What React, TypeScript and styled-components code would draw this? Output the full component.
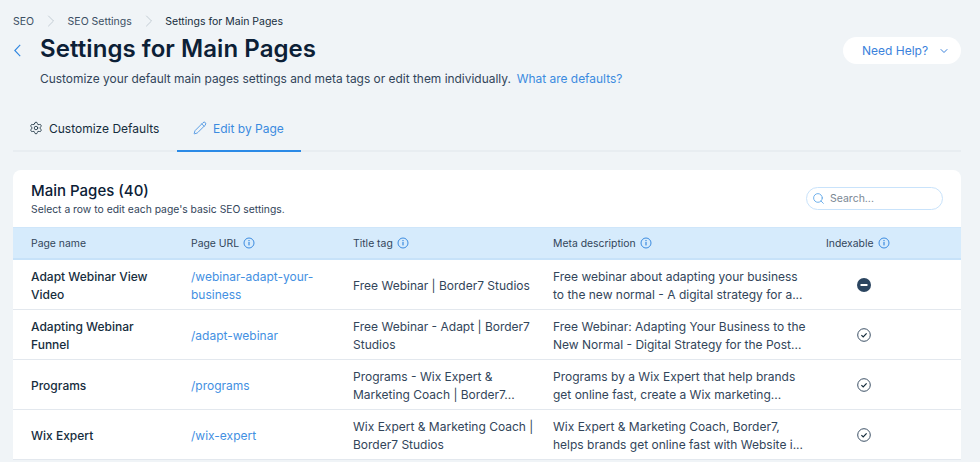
import * as React from 'react';
import styled, { createGlobalStyle } from 'styled-components';
import { ChevronDown, ChevronRight, Search, Settings, Pencil } from 'lucide-react';

const GlobalStyle = createGlobalStyle`
	html, body {
		margin: 0;
		padding: 0;
		height: 100%;
		overflow: hidden;
		background-color: #f0f4f7;
		font-family: Inter, "Noto Sans", sans-serif;
		color: #162d3d;
	}
	* {
		box-sizing: border-box;
	}
`;

const Page = styled.div`
	width: 980px;
	height: 462px;
	overflow: hidden;
	padding: 0 19px 0 13px;
	display: flex;
	flex-direction: column;
`;

const Breadcrumbs = styled.nav`
	display: flex;
	align-items: center;
	height: 16px;
	margin-top: 13px;
	font-size: 10.5px;
`;

const Crumb = styled.span<{ current?: boolean }>`
	color: ${({ current }) => (current ? '#162d3d' : '#3b4f63')};
`;

const CrumbSep = styled.span`
	display: flex;
	width: 33.5px;
	justify-content: center;
	color: #b4bec8;
`;

const Header = styled.header`
	display: flex;
	justify-content: space-between;
	align-items: flex-start;
`;

const TitleRow = styled.div`
	display: flex;
	align-items: center;
	height: 34px;
	margin-top: 2px;
`;

const BackButton = styled.span`
	display: flex;
	width: 27px;
	padding: 5px 0 0 1px;
`;

const Title = styled.h1`
	margin: 0;
	font-size: 24px;
	font-weight: 600;
	color: #0c2036;
	letter-spacing: 0.07px;
`;

const Subtitle = styled.p`
	margin: 5px 0 0 27px;
	font-size: 11.93px;
	line-height: 18px;
	color: #32455a;
`;

const Link = styled.a`
	margin-left: 6px;
	color: #3b8be0;
`;

const HelpButton = styled.button`
	display: flex;
	align-items: center;
	justify-content: space-between;
	width: 118px;
	height: 27px;
	margin-top: 8px;
	padding: 0 11px 0 19px;
	border: 0;
	border-radius: 14px;
	background-color: #fff;
	color: #3b82dc;
	font-family: inherit;
	font-size: 12px;
`;

const Tabs = styled.div`
	display: flex;
	height: 48px;
	margin-top: 16px;
	border-bottom: 2px solid #e8edf1;
`;

const Tab = styled.div<{ active?: boolean }>`
	display: flex;
	align-items: center;
	gap: 6px;
	height: 48px;
	padding: 2px 17.6px 0 16px;
	font-size: 12px;
	color: ${({ active }) => (active ? '#3b8be0' : '#162d3d')};
	border-bottom: 2px solid ${({ active }) => (active ? '#2b8ae6' : 'transparent')};
`;

const Card = styled.section`
	margin-top: 18px;
	background-color: #fff;
	border-radius: 8px 8px 0 0;
`;

const CardHeader = styled.div`
	display: flex;
	justify-content: space-between;
	height: 57px;
	padding: 11px 18px;
`;

const CardTitle = styled.h2`
	margin: 0;
	font-size: 15px;
	line-height: 20px;
	font-weight: 500;
	color: #0c2036;
`;

const CardHint = styled.p`
	margin: 1px 0 0;
	font-size: 10.35px;
	line-height: 14px;
	color: #32455a;
`;

const SearchBox = styled.div`
	display: flex;
	align-items: center;
	gap: 5px;
	width: 137px;
	height: 23px;
	margin-top: 6px;
	padding: 0 5px;
	border: 1px solid #c9e3fb;
	border-radius: 12px;
	font-size: 10.5px;
	color: #7a8794;
`;

const HeadRow = styled.div`
	display: grid;
	grid-template-columns: 160px 162px 200px 273px 1fr;
	align-items: center;
	height: 33px;
	padding-left: 18px;
	background-color: #d6ebfc;
	border-top: 1px solid #cfe6fa;
	border-bottom: 2px solid #c7e2f9;
	font-size: 10.4px;
	color: #32455a;
`;

const HeadCell = styled.div`
	display: flex;
	align-items: center;
	gap: 4px;
`;

const Row = styled.div`
	display: grid;
	grid-template-columns: 160px 162px 200px 273px 1fr;
	align-items: center;
	height: 50px;
	padding-left: 18px;
	border-bottom: 1px solid #e3e8ee;
	font-size: 12px;
	line-height: 18px;
	color: #32455a;
`;

const TextCell = styled.div`
	padding-top: 2px;
`;

const NameCell = styled(TextCell)`
	font-weight: 450;
	color: #162d3d;
`;

const UrlCell = styled(TextCell)`
	color: #4390e2;
`;

const Line = styled.div`
	white-space: nowrap;
`;

const StatusCell = styled.div`
	display: flex;
	padding-left: 31px;
`;

const BackIcon = () => (
	<svg width="7" height="13" viewBox="0 0 7 13" fill="none">
		<path d="M6.2 .8.8 6.5l5.4 5.7" stroke="#2f86e0" strokeWidth="1.1" />
	</svg>
);

const InfoIcon = () => (
	<svg width="12" height="12" viewBox="0 0 12 12" fill="none">
		<circle cx="6" cy="6" r="5" stroke="#3b8be0" />
		<rect x="5.4" y="5" width="1.2" height="3.4" fill="#3b8be0" />
		<rect x="5.4" y="3" width="1.2" height="1.2" fill="#3b8be0" />
	</svg>
);

const CheckIcon = () => (
	<svg width="14" height="14" viewBox="0 0 14 14" fill="none">
		<circle cx="7" cy="7" r="6.3" stroke="#3d5166" />
		<path d="M4.4 7.2 6.2 9l3.4-3.6" stroke="#162d3d" strokeWidth="1.2" />
	</svg>
);

const MinusIcon = () => (
	<svg width="14" height="14" viewBox="0 0 14 14">
		<circle cx="7" cy="7" r="7" fill="#2b4560" />
		<rect x="3.5" y="6" width="7" height="2" rx="0.5" fill="#fff" />
	</svg>
);

const columns = [
	{ label: 'Page name', info: false },
	{ label: 'Page URL', info: true },
	{ label: 'Title tag', info: true },
	{ label: 'Meta description', info: true },
	{ label: 'Indexable', info: true }
];

const rows = [
	{
		name: ['Adapt Webinar View', 'Video'],
		url: ['/webinar-adapt-your-', 'business'],
		title: ['Free Webinar | Border7 Studios'],
		meta: ['Free webinar about adapting your business', 'to the new normal - A digital strategy for a...'],
		indexable: false
	},
	{
		name: ['Adapting Webinar', 'Funnel'],
		url: ['/adapt-webinar'],
		title: ['Free Webinar - Adapt | Border7', 'Studios'],
		meta: ['Free Webinar: Adapting Your Business to the', 'New Normal - Digital Strategy for the Post...'],
		indexable: true
	},
	{
		name: ['Programs'],
		url: ['/programs'],
		title: ['Programs - Wix Expert &', 'Marketing Coach | Border7...'],
		meta: ['Programs by a Wix Expert that help brands', 'get online fast, create a Wix marketing...'],
		indexable: true
	},
	{
		name: ['Wix Expert'],
		url: ['/wix-expert'],
		title: ['Wix Expert & Marketing Coach |', 'Border7 Studios'],
		meta: ['Wix Expert & Marketing Coach, Border7,', 'helps brands get online fast with Website i...'],
		indexable: true
	}
];

const Lines = ({ lines }: { lines: string[] }) => (
	<>
		{lines.map((line) => (
			<Line key={line}>{line}</Line>
		))}
	</>
);

const App = () => (
	<Page>
		<GlobalStyle />
		<Breadcrumbs>
			<Crumb>SEO</Crumb>
			<CrumbSep>
				<ChevronRight size={20} strokeWidth={0.9} />
			</CrumbSep>
			<Crumb>SEO Settings</Crumb>
			<CrumbSep>
				<ChevronRight size={20} strokeWidth={0.9} />
			</CrumbSep>
			<Crumb current>Settings for Main Pages</Crumb>
		</Breadcrumbs>
		<Header>
			<div>
				<TitleRow>
					<BackButton>
						<BackIcon />
					</BackButton>
					<Title>Settings for Main Pages</Title>
				</TitleRow>
				<Subtitle>
					Customize your default main pages settings and meta tags or edit them individually.
					<Link>What are defaults?</Link>
				</Subtitle>
			</div>
			<HelpButton>
				Need Help?
				<ChevronDown size={12} />
			</HelpButton>
		</Header>
		<Tabs>
			<Tab>
				<Settings size={14} strokeWidth={1.4} />
				Customize Defaults
			</Tab>
			<Tab active>
				<Pencil size={14} strokeWidth={1.4} />
				Edit by Page
			</Tab>
		</Tabs>
		<Card>
			<CardHeader>
				<div>
					<CardTitle>Main Pages (40)</CardTitle>
					<CardHint>Select a row to edit each page's basic SEO settings.</CardHint>
				</div>
				<SearchBox>
					<Search size={13} color="#5aa5e8" strokeWidth={1.6} />
					Search...
				</SearchBox>
			</CardHeader>
			<HeadRow>
				{columns.map((col) => (
					<HeadCell key={col.label}>
						{col.label}
						{col.info && <InfoIcon />}
					</HeadCell>
				))}
			</HeadRow>
			{rows.map((row) => (
				<Row key={row.url[0]}>
					<NameCell>
						<Lines lines={row.name} />
					</NameCell>
					<UrlCell>
						<Lines lines={row.url} />
					</UrlCell>
					<TextCell>
						<Lines lines={row.title} />
					</TextCell>
					<TextCell>
						<Lines lines={row.meta} />
					</TextCell>
					<StatusCell>{row.indexable ? <CheckIcon /> : <MinusIcon />}</StatusCell>
				</Row>
			))}
		</Card>
	</Page>
);

export default App;
